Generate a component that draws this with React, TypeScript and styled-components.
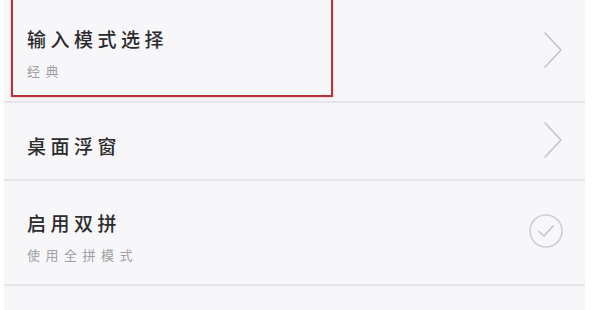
import styled, { createGlobalStyle } from "styled-components";

const GlobalStyle = createGlobalStyle`
  html, body {
    margin: 0;
    padding: 0;
    background: #ffffff;
  }
  body {
    font-family: "Noto Sans CJK SC", "Noto Sans", sans-serif;
  }
`;

interface SettingItem {
  title: string;
  subtitle?: string;
  action: "arrow" | "check";
  height: number;
  highlighted?: boolean;
}

const items: SettingItem[] = [
  { title: "输入模式选择", subtitle: "经典", action: "arrow", height: 103, highlighted: true },
  { title: "桌面浮窗", action: "arrow", height: 78 },
  { title: "启用双拼", subtitle: "使用全拼模式", action: "check", height: 105 },
  { title: "", action: "arrow", height: 40 },
];

function Chevron() {
  return (
    <svg width="22" height="38" viewBox="0 0 22 38" fill="none">
      <path
        d="M3 2 L19 19 L3 36"
        stroke="#c4c3c7"
        strokeWidth="1.6"
        strokeLinecap="round"
        strokeLinejoin="round"
      />
    </svg>
  );
}

function CheckCircle() {
  return (
    <svg width="36" height="36" viewBox="0 0 36 36" fill="none">
      <circle cx="18" cy="18" r="16" stroke="#cfced2" strokeWidth="1.6" />
      <path
        d="M11 18.5 L16 23 L25 13"
        stroke="#c4c3c7"
        strokeWidth="1.6"
        strokeLinecap="round"
        strokeLinejoin="round"
      />
    </svg>
  );
}

export default function App() {
  return (
    <>
      <GlobalStyle />
      <S.Page>
        <S.Panel>
          {items.map((item, i) => (
            <S.Row key={i} $height={item.height} $last={i === items.length - 1}>
              {item.highlighted && <S.Highlight />}
              {item.title && (
                <S.TextBlock $raised={item.highlighted}>
                  <S.Title>{item.title}</S.Title>
                  {item.subtitle && <S.Subtitle>{item.subtitle}</S.Subtitle>}
                </S.TextBlock>
              )}
              {item.title && (
                <S.Action $check={item.action === "check"}>
                  {item.action === "arrow" ? <Chevron /> : <CheckCircle />}
                </S.Action>
              )}
            </S.Row>
          ))}
        </S.Panel>
      </S.Page>
    </>
  );
}

const S = {
  Page: styled.div`
    width: 600px;
    height: 310px;
    overflow: hidden;
    background: #ffffff;
    padding-left: 4px;
    box-sizing: border-box;
  `,
  Panel: styled.div`
    width: 581px;
    background: #f7f6f9;
    display: flex;
    flex-direction: column;
  `,
  Row: styled.div<{ $height: number; $last?: boolean }>`
    position: relative;
    height: ${({ $height }) => $height}px;
    flex-shrink: 0;
    display: flex;
    align-items: center;
    justify-content: space-between;
    padding: 0 21px 0 23px;
    box-sizing: border-box;
    border-bottom: ${({ $last }) => ($last ? "none" : "2px solid #e6e5e9")};
  `,
  Highlight: styled.div`
    position: absolute;
    left: 7px;
    top: -3px;
    width: 322px;
    height: 100px;
    box-sizing: border-box;
    border: 2.5px solid #b3343a;
    box-shadow: 0 0 2px rgba(200, 60, 70, 0.45);
    pointer-events: none;
  `,
  TextBlock: styled.div<{ $raised?: boolean }>`
    display: flex;
    flex-direction: column;
    gap: 13px;
    padding-top: ${({ $raised }) => ($raised ? "4px" : "9px")};
  `,
  Title: styled.div`
    font-size: 19px;
    line-height: 22px;
    letter-spacing: 4.5px;
    color: #2c2b2e;
    font-weight: 500;
  `,
  Subtitle: styled.div`
    font-size: 13px;
    line-height: 15px;
    letter-spacing: 5.5px;
    color: #a09fa3;
  `,
  Action: styled.div<{ $check?: boolean }>`
    display: flex;
    align-items: center;
    margin-top: ${({ $check }) => ($check ? "-4px" : "-2px")};
  `,
};
